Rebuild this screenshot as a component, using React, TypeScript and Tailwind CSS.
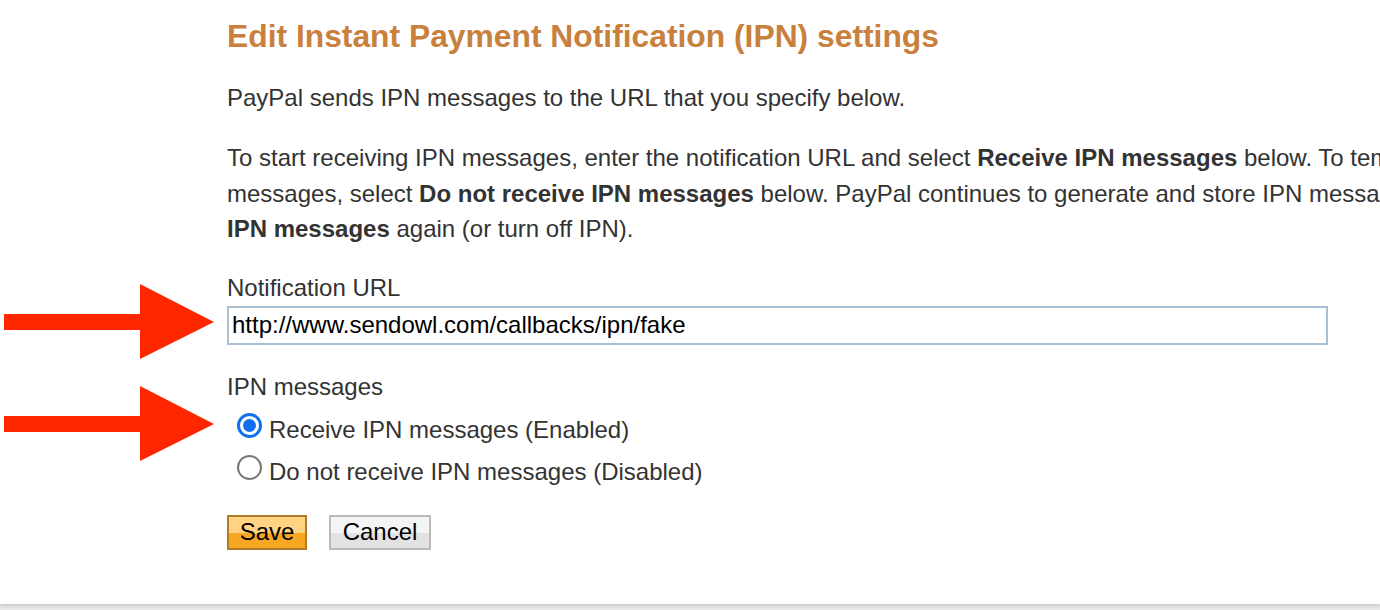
import React from "react";

function Arrow({ top }: { top: number }) {
  return (
    <svg
      className="absolute left-0"
      style={{ top }}
      width="220"
      height="76"
      viewBox="0 0 220 76"
    >
      <path d="M4 30 H140 V0 L214 38 L140 75 V46 H4 Z" fill="#ff2600" />
    </svg>
  );
}

export default function App() {
  return (
    <div
      className="relative w-[1380px] h-[610px] overflow-hidden bg-[#e9e9e9]"
      style={{ fontFamily: '"Liberation Sans", Arial, sans-serif' }}
    >
      <div className="h-[604px] bg-white shadow-[0_2px_4px_rgba(0,0,0,0.15)] pl-[227px] pt-[17px] text-[#333333] whitespace-nowrap">
        <h1 className="text-[31.8px] leading-[38px] font-bold text-[#c9803c]">
          Edit Instant Payment Notification (IPN) settings
        </h1>
        <p className="mt-[25px] text-[24px] leading-[35px]">
          PayPal sends IPN messages to the URL that you specify below.
        </p>
        <p className="mt-[25px] text-[24px] leading-[35.5px]">
          To start receiving IPN messages, enter the notification URL and select{" "}
          <b>Receive IPN messages</b> below. To temporarily stop receiving IPN
          <br />
          messages, select <b>Do not receive IPN messages</b> below. PayPal
          continues to generate and store IPN messages until you select{" "}
          <b>Receive</b>
          <br />
          <b>IPN messages</b> again (or turn off IPN).
        </p>
        <div className="mt-[23px] text-[24px] leading-[35px]">Notification URL</div>
        <div className="mt-[1px] w-[1101px] h-[39px] border-2 border-[#aabfd3] flex items-center pl-[3px] text-[24px] text-black">
          http://www.sendowl.com/callbacks/ipn/fake
        </div>
        <div className="mt-[24px] text-[24px] leading-[35px]">IPN messages</div>
        <div className="flex flex-col mt-[5px]">
          <label className="flex items-start h-[42px] text-[24px] leading-[42px]">
            <span className="mt-[4px] ml-[10px] mr-[7px] w-[25px] h-[25px] rounded-full border-[3px] border-[#0f6fee] flex items-center justify-center">
              <span className="w-[13px] h-[13px] rounded-full bg-[#0f6fee]" />
            </span>
            Receive IPN messages (Enabled)
          </label>
          <label className="flex items-start h-[42px] text-[24px] leading-[42px]">
            <span className="mt-[4px] ml-[10px] mr-[7px] w-[25px] h-[25px] rounded-full border-2 border-[#777777] bg-white" />
            Do not receive IPN messages (Disabled)
          </label>
        </div>
        <div className="flex gap-[22px] mt-[22px]">
          <button className="w-[80px] h-[35px] border-2 border-[#b07a2a] bg-[linear-gradient(#ffd381_0%,#ffd381_52%,#f8a722_52%,#f8a722_100%)] text-[24px] text-black leading-none">
            Save
          </button>
          <button className="w-[102px] h-[35px] border-2 border-[#b9b9b9] bg-[linear-gradient(#f4f4f4_0%,#f4f4f4_52%,#e2e2e2_52%,#e2e2e2_100%)] text-[24px] text-black leading-none">
            Cancel
          </button>
        </div>
      </div>
      <Arrow top={284} />
      <Arrow top={386} />
    </div>
  );
}
